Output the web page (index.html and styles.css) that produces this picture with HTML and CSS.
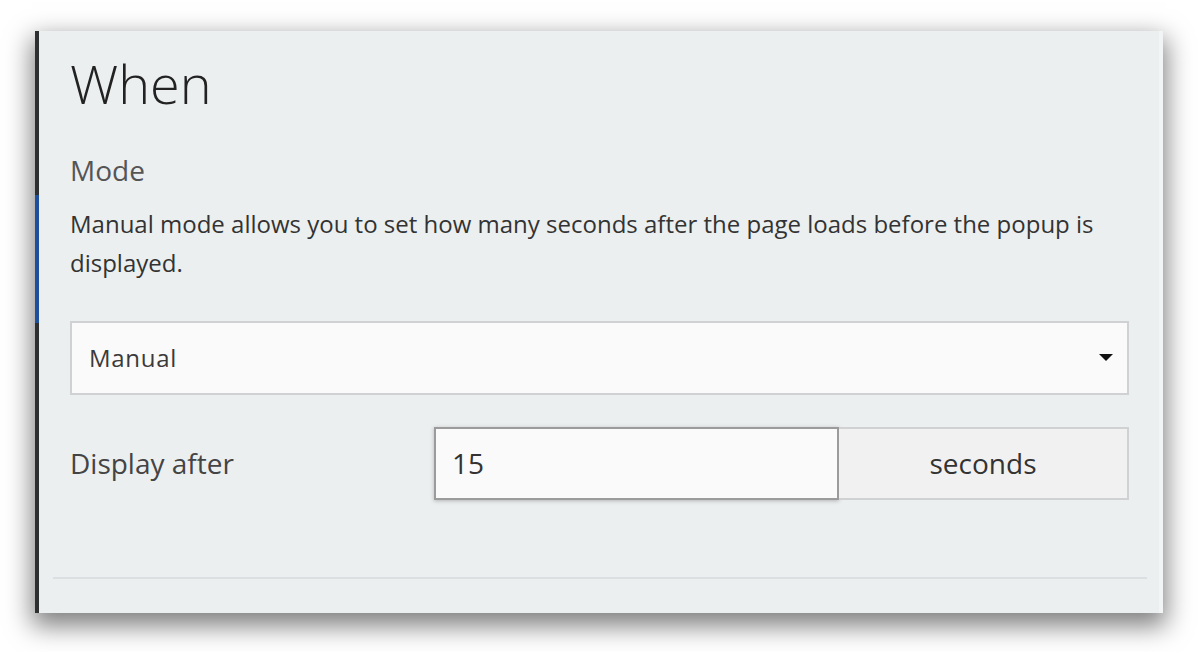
FILE: index.html
```html
<html>
<head>
<meta name="viewport" content="width=device-width, initial-scale=1.0">
<title>When</title>
<link rel="stylesheet" href="styles.css">
</head>
<body>
	<div class="panel">
		<h1 class="title">When</h1>
		<h3 class="label">Mode</h3>
		<p class="help">Manual mode allows you to set how many seconds after the page loads before the popup is displayed.</p>

		<div class="select">
			<span>Manual</span>
			<span class="caret"></span>
		</div>

		<div class="row">
			<label class="row-label">Display after</label>
			<input class="num" type="text" value="15">
			<span class="addon">seconds</span>
		</div>

		<hr class="line">
	</div>
</body>
</html>
```

FILE: styles.css
```css
*{
	box-sizing: border-box;
	margin: 0px;
	padding: 0px;
}

body{
	background: #ffffff;
	font-family: 'Open Sans', sans-serif;
	color: #333;
	padding: 31px 35px 39px 35px;
}

.panel{
	position: relative;
	height: 582px;
	background: #eceff0;
	border-left: 4px solid #2e2f31;
	padding: 20px 34px 0 31px;
	box-shadow: 0 10px 24px 3px rgba(0, 0, 0, 0.5);
}

.panel:before{
	content: "";
	position: absolute;
	left: -4px;
	top: 164px;
	width: 4px;
	height: 128px;
	background: #1d4f9c;
}

.panel:after{
	content: "";
	position: absolute;
	right: 0;
	top: 0;
	width: 4px;
	height: 100%;
	background: #f2f4f5;
}

.title{
	font-size: 54px;
	font-weight: 300;
	color: #222;
	line-height: 1.2;
}

.label{
	margin-top: 35px;
	font-size: 28px;
	font-weight: 400;
	color: #555;
	line-height: 1.4;
}

.help{
	margin-top: 14px;
	font-size: 24px;
	line-height: 39px;
	color: #333;
}

.select{
	margin-top: 39px;
	height: 74px;
	background: #fafafa;
	border: 2px solid #cfd1d2;
	display: flex;
	align-items: center;
	justify-content: space-between;
	padding: 0 14px 0 17px;
	font-size: 24px;
	color: #3a3a3a;
	letter-spacing: 0.03em;
}

.caret{
	width: 0;
	height: 0;
	border-left: 7px solid transparent;
	border-right: 7px solid transparent;
	border-top: 7px solid #111;
}

.row{
	margin-top: 32px;
	display: grid;
	grid-template-columns: 364px 405px 1fr;
	align-items: center;
}

.row-label{
	font-size: 28px;
	color: #444;
}

.num{
	height: 73px;
	border: 2px solid #9b9b9b;
	background: #fafafa;
	padding: 0 16px;
	font-family: 'Open Sans', sans-serif;
	font-size: 28px;
	color: #333;
	box-shadow: 0 1px 4px rgba(0, 0, 0, 0.25);
	outline: none;
}

.addon{
	height: 73px;
	background: #f1f1f1;
	border: 2px solid #cfd1d2;
	border-left: 0;
	display: flex;
	align-items: center;
	justify-content: center;
	font-size: 28px;
	color: #333;
}

.line{
	margin: 77px -18px 0 -17px;
	border: 0;
	height: 2px;
	background: #dcdfe1;
}
```
